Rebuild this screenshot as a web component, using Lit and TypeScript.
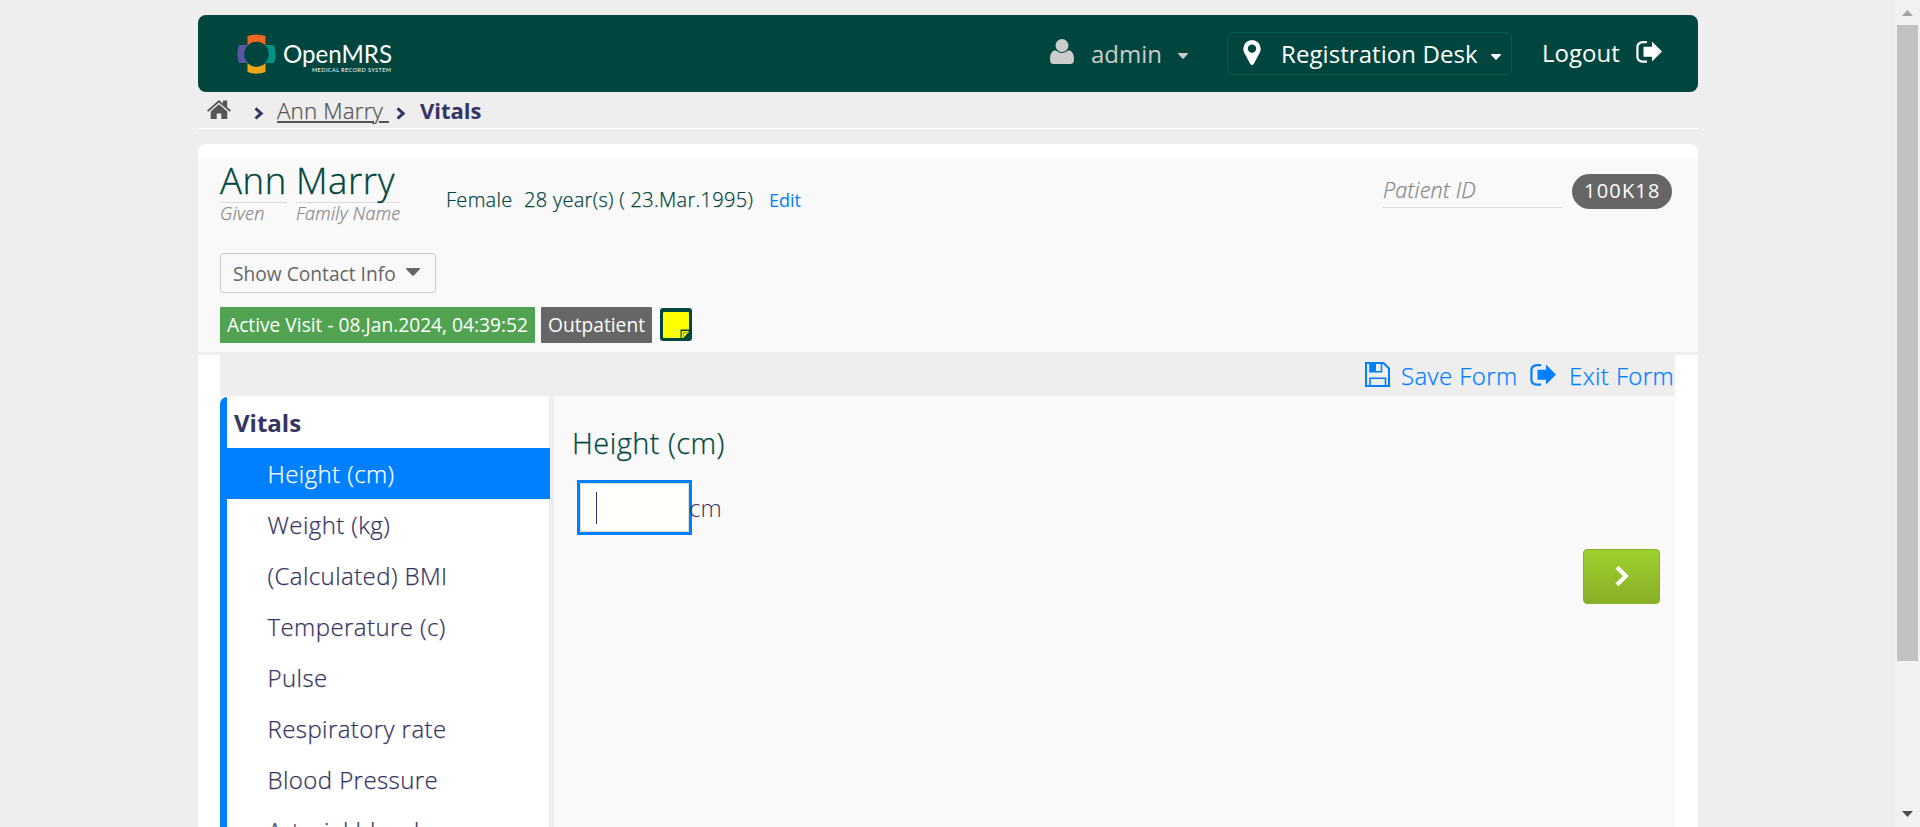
import { LitElement, html, css, svg } from "lit";
import { customElement, state } from "lit/decorators.js";

const exitPaths = svg`
  <path d="M11 1.2H7.2C3.6 1.2 1.4 3.2 1.4 6.6v8.6c0 3.4 2.2 5.4 5.6 5.4h4" fill="none" stroke="currentColor" stroke-width="2.2"/>
  <path d="M7.5 5.7H16V.6L26 10.4 16 20.6v-4.9H7.5z" fill="currentColor"/>`;

@customElement("app-root")
export class AppRoot extends LitElement {
  @state() private selected = 0;

  private fields = [
    "Height (cm)", "Weight (kg)", "(Calculated) BMI", "Temperature (c)",
    "Pulse", "Respiratory rate", "Blood Pressure", "Arterial blood",
  ];

  static styles = css`
    :host {
      display: flex;
      justify-content: space-between;
      height: 827px;
      overflow: hidden;
      background: #eee;
      font-family: "Open Sans", "Noto Sans", sans-serif;
      font-size: 24px;
      font-weight: 300;
      line-height: 30px;
      color: #363463;
      white-space: nowrap;
    }
    * { box-sizing: border-box; }
    svg { display: block; flex: none; }
    .page { width: 1500px; margin-left: 198px; padding-top: 15px; flex: none; }
    .top {
      display: flex;
      align-items: flex-start;
      height: 77px;
      border-radius: 8px;
      background: #00463f;
      color: #fff;
      font-weight: 400;
    }
    .logo { margin: 17px 0 0 37px; }
    .logo-name { font: 400 24.5px Lato, sans-serif; }
    .logo-sub { font: 400 5.6px Lato, sans-serif; }
    .user { display: flex; width: 177px; margin-left: 655px; color: #ccc; }
    .user svg { margin-top: 24px; }
    .user span { width: 87px; margin: 24px 0 0 17px; }
    .user .caret { margin-top: 38px; }
    .location {
      display: flex;
      width: 285px;
      height: 43px;
      margin-top: 17px;
      border: 1px solid #005e52;
      border-radius: 5px;
    }
    .location svg { margin: 7px 0 0 15px; }
    .location span { width: 210px; margin: 6px 0 0 20px; letter-spacing: .07px; }
    .location .caret { margin: 21px 0 0; }
    .logout { display: flex; margin-left: 30px; }
    .logout span { width: 94px; margin-top: 23px; }
    .logout svg { margin-top: 26px; }
    .crumbs {
      display: flex;
      height: 37px;
      border-bottom: 1px solid #fff;
      padding-left: 9px;
    }
    .crumbs .home { margin: 8px 23px 0 0; color: #555; }
    .crumbs .sep { margin-top: 15px; }
    .crumbs a {
      width: 111px;
      height: 31px;
      margin: 4px 8px 0 13px;
      color: #555;
      font-size: 22.4px;
      letter-spacing: .15px;
      -webkit-text-stroke: .25px #555;
      white-space: pre;
      text-decoration: underline;
      text-decoration-thickness: 2px;
      text-underline-offset: 2px;
    }
    .crumbs b { margin: 3px 0 0 14px; font-size: 22px; font-weight: 700; }
    .panel {
      height: 700px;
      margin-top: 15px;
      padding-top: 15px;
      border-radius: 8px 8px 0 0;
      background: #fff;
    }
    .patient {
      height: 196px;
      padding: 0 26px 0 22px;
      border-bottom: 3px solid #eee;
      background: #f9f9f9;
    }
    .row { display: flex; align-items: flex-start; }
    .identity { height: 94px; }
    .name { margin-right: 9px; }
    .name .value {
      height: 44px;
      border-bottom: 1px solid #ddd;
      color: #00463f;
      font-size: 36.5px;
      letter-spacing: .6px;
      -webkit-text-stroke: .35px #00463f;
      line-height: 43px;
    }
    .name em, .pid em {
      display: block;
      color: #888;
      font-size: 18px;
      line-height: 21px;
      letter-spacing: .3px;
      -webkit-text-stroke: .25px #888;
    }
    .given { width: 67px; }
    .family { width: 104px; }
    .demo {
      display: flex;
      margin: 26px 0 0 37px;
      color: #00463f;
      font-size: 20px;
      letter-spacing: .3px;
      -webkit-text-stroke: .25px #00463f;
    }
    .demo .gender { width: 78px; }
    .demo .age { width: 245px; }
    .demo a { color: #007fff; font-size: 18px; font-weight: 400; letter-spacing: 0; -webkit-text-stroke: 0; }
    .pid { width: 180px; height: 49px; margin-left: auto; border-bottom: 1px solid #ddd; }
    .pid em { margin-top: 16px; font-size: 21.6px; line-height: 30px; letter-spacing: .2px; }
    .badge {
      width: 100px;
      height: 35px;
      margin: 15px 0 0 9px;
      padding-left: 12px;
      border-radius: 18px;
      background: #666;
      color: #fff;
      font-size: 20px;
      font-weight: 400;
      line-height: 34px;
      letter-spacing: 1.2px;
    }
    .contact {
      display: flex;
      width: 216px;
      height: 40px;
      padding-left: 12px;
      border: 1px solid #ccc;
      border-radius: 3px;
      color: #666;
      font-size: 19.2px;
      font-weight: 400;
      line-height: 39px;
    }
    .contact span { width: 173px; }
    .contact svg { margin-top: 14px; }
    .visit { margin-top: 14px; font-size: 19.2px; font-weight: 400; line-height: 36px; color: #fff; }
    .tag { height: 36px; padding-left: 7px; border-radius: 1px; }
    .active { width: 315px; margin-right: 6px; background: #51a351; }
    .type { width: 111px; margin-right: 8px; background: #666; }
    .visit svg { margin-top: 1px; }
    .form { display: flex; flex-direction: column; margin: -3px 23px 0 22px; }
    .actions {
      display: flex;
      height: 44px;
      padding-left: 1145px;
      background: #eee;
      color: #007fff;
      letter-spacing: .4px;
    }
    .actions span { margin-top: 9px; -webkit-text-stroke: .25px #007fff; }
    .actions .save-label { width: 129px; margin-left: 11px; }
    .actions .exit-label { margin-left: 12px; }
    .actions .save { margin-top: 10px; }
    .actions .exit { margin-top: 12px; }
    .body { display: flex; height: 440px; background: #f9f9f9; }
    .side {
      width: 334px;
      padding-top: 1px;
      border-right: 5px solid #eee;
    }
    .list {
      width: 329px;
      height: 439px;
      border-left: 7px solid #007fff;
      border-right: 1px solid #f9f9f9;
      border-top-left-radius: 7px;
      background: #fff;
    }
    .list b { display: block; height: 51px; padding-left: 7px; font-weight: 700; line-height: 51px; }
    .item {
      width: 323px;
      height: 51px;
      padding-left: 40.5px;
      line-height: 52px;
      letter-spacing: .42px;
      -webkit-text-stroke: .25px currentColor;
      cursor: pointer;
    }
    .item.on { background: #007fff; color: #fff; }
    .main { width: 1121px; padding: 31px 15px 0 18px; }
    .title {
      height: 53px;
      color: #00463f;
      font-size: 29px;
      line-height: 32px;
      letter-spacing: .45px;
      -webkit-text-stroke: .25px #00463f;
    }
    .entry { display: flex; height: 69px; padding-left: 5px; }
    .input {
      width: 115px;
      height: 55px;
      padding: 9px 0 0 16px;
      border: 3px solid #007fff;
      box-shadow: inset 0 0 0 1px #ddd;
      background: #fffffb;
    }
    .cursor { width: 1px; height: 32px; background: #363463; }
    .unit { margin: 13px 0 0 -3px; }
    .next {
      display: flex;
      align-items: center;
      justify-content: center;
      width: 77px;
      height: 55px;
      margin-left: auto;
      border: 1px solid #88af28;
      border-radius: 4px;
      background: linear-gradient(#a1d02e, #88af28);
    }
    .next svg { margin-top: -1px; }
    .scroll {
      display: flex;
      flex-direction: column;
      align-items: center;
      width: 25px;
      padding: 10px 0;
      background: #f1f1f1;
    }
    .thumb { width: 21px; height: 636px; margin: 9px 0 auto; background: #c1c1c1; }
  `;

  private chevron() {
    return html`<svg class="sep" width="10" height="13" viewBox="0 0 10 13">
      <path d="M1.500 1.300L7.200 6.400 1.500 11.500" fill="none" stroke="#363463" stroke-width="3"/></svg>`;
  }

  private caret(w: number, h: number) {
    return html`<svg class="caret" width=${w} height=${h} viewBox="0 0 10 6" preserveAspectRatio="none">
      <path d="M.4 0h9.2q.7.3.2.9L5.6 5.6q-.6.6-1.2 0L.2.9Q-.3.3.4 0z" fill="currentColor"/></svg>`;
  }

  render() {
    return html`
      <div class="page">
        <header class="top">
          <svg class="logo" width="160" height="44" viewBox="235 32 160 44">
            <path d="M247.500 45.500V36q9-3 18 0v9.500a12.600 12.600 0 0 0-18 0z" fill="#f26522"/>
            <path d="M247.500 63v9q9 3.300 18 0v-9a12.600 12.600 0 0 1-18 0z" fill="#eea616"/>
            <path d="M248 45h-9q-3.200 9 0 18h9a12.600 12.600 0 0 1 0-18z" fill="#5b57a6"/>
            <path d="M265 45h9q3.200 9 0 18h-9a12.600 12.600 0 0 0 0-18z" fill="#009384"/>
            <text class="logo-name" x="283" y="63" textLength="109" lengthAdjust="spacingAndGlyphs" fill="#fff">OpenMRS</text>
            <text class="logo-sub" x="312" y="72" textLength="79" fill="#fff">MEDICAL RECORD SYSTEM</text>
          </svg>
          <div class="user">
            <svg width="24" height="25" viewBox="0 0 24 25" fill="currentColor">
              <circle cx="12" cy="6.500" r="6.500"/>
              <path d="M5.500 11.300q6.500 5.200 13 0C22.500 11.800 24 15.500 24 20.500c0 3-1.300 4.500-3.500 4.500h-17C1.300 25 0 23.500 0 20.500c0-5 1.500-8.700 5.500-9.200z"/>
            </svg>
            <span>admin</span>${this.caret(10, 6)}
          </div>
          <div class="location">
            <svg width="18" height="25" viewBox="0 0 18 25">
              <path fill-rule="evenodd" d="M9 0a8.700 8.700 0 0 1 8.700 8.700c0 1.500-.3 2.600-.8 3.700L10.700 24q-1.700 2-3.400 0L1.100 12.400C.6 11.300.3 10.200.3 8.700A8.700 8.700 0 0 1 9 0zm0 4.400a4.200 4.200 0 1 0 0 8.400 4.200 4.200 0 0 0 0-8.400z" fill="#fff"/>
            </svg>
            <span>Registration Desk</span>${this.caret(10, 6)}
          </div>
          <div class="logout">
            <span>Logout</span>
            <svg width="27" height="22" viewBox="0 0 27 22">${exitPaths}</svg>
          </div>
        </header>

        <nav class="crumbs">
          <svg class="home" width="24" height="19" viewBox="0 0 24 19" fill="currentColor">
            <path d="M12 0l4 3.500V.6h4.200v6.600L24 10.600l-1.300 1.200L12 2.600 1.300 11.800 0 10.600z"/>
            <path d="M12 4.200l8.300 7.200V19h-6v-5.600H9.700V19h-6v-7.600z"/>
          </svg>
          ${this.chevron()}
          <a>Ann Marry </a>
          ${this.chevron()}
          <b>Vitals</b>
        </nav>

        <div class="panel">
          <section class="patient">
            <div class="row identity">
              <div class="name given"><div class="value">Ann</div><em>Given</em></div>
              <div class="name family"><div class="value">Marry</div><em>Family Name</em></div>
              <div class="demo">
                <span class="gender">Female</span>
                <span class="age">28 year(s) ( 23.Mar.1995)</span>
                <a>Edit</a>
              </div>
              <div class="pid"><em>Patient ID</em></div>
              <div class="badge">100K18</div>
            </div>
            <div class="contact"><span>Show Contact Info</span>${this.caret(14, 8)}</div>
            <div class="row visit">
              <div class="tag active">Active Visit - 08.Jan.2024, 04:39:52</div>
              <div class="tag type">Outpatient</div>
              <svg width="32" height="33" viewBox="0 0 32 33">
                <rect width="32" height="33" rx="3" fill="#00463f"/>
                <path d="M4 4h24q1 0 1 1v16.500h-8.500V30H4q-1 0-1-1V5q0-1 1-1z" fill="#ff0"/>
                <path d="M21.700 23h6.800v1.200L23.200 30h-1.500z" fill="#ff0"/>
                <path d="M23.300 28.500v-4h4" fill="none" stroke="#00463f" stroke-width=".5"/>
              </svg>
            </div>
          </section>

          <section class="form">
            <div class="actions">
              <svg class="save" width="25" height="25" viewBox="0 0 25 25">
                <path d="M1 1h17.500L24 6.500V24H1z" fill="none" stroke="currentColor" stroke-width="2"/>
                <path d="M5 1v8.700h11.500V1M5 24v-7.700h15.500V24" fill="none" stroke="currentColor" stroke-width="1.600"/>
                <path d="M5 1h6v8H5z" fill="currentColor"/>
              </svg>
              <span class="save-label">Save Form</span>
              <svg class="exit" width="27" height="22" viewBox="0 0 27 22">${exitPaths}</svg>
              <span class="exit-label">Exit Form</span>
            </div>
            <div class="body">
              <div class="side">
                <div class="list">
                  <b>Vitals</b>
                  ${this.fields.map((f, i) => html`
                    <div class="item ${i === this.selected ? "on" : ""}" @click=${() => (this.selected = i)}>${f}</div>`)}
                </div>
              </div>
              <div class="main">
                <div class="title">Height (cm)</div>
                <div class="entry">
                  <div class="input"><div class="cursor"></div></div>
                  <span class="unit">cm</span>
                </div>
                <div class="next">
                  <svg width="14" height="22" viewBox="0 0 14 22">
                    <path d="M2 2.300L10.800 11 2 19.700" fill="none" stroke="#fff" stroke-width="4.200"/>
                  </svg>
                </div>
              </div>
            </div>
          </section>
        </div>
      </div>

      <div class="scroll">
        <svg width="11" height="6" viewBox="0 0 11 6"><path d="M5.500 0L11 6H0z" fill="#a3a3a3"/></svg>
        <div class="thumb"></div>
        <svg width="11" height="6" viewBox="0 0 11 6"><path d="M0 0h11L5.500 6z" fill="#505050"/></svg>
      </div>
    `;
  }
}
